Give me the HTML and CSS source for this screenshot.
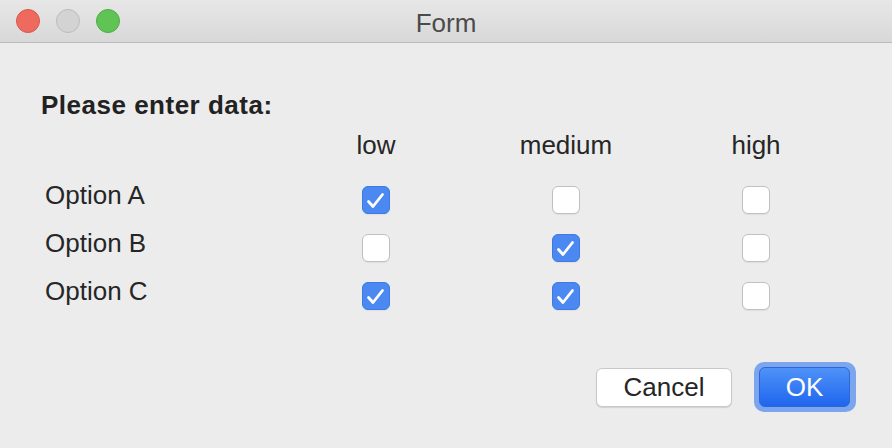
FILE: index.html
```html
<!DOCTYPE html>
<html>
<head>
<meta charset="utf-8">
<link rel="stylesheet" href="styles.css">
</head>
<body>
<div class="window">
  <div class="titlebar">
    <div class="lights">
      <span class="light red"></span>
      <span class="light gray"></span>
      <span class="light green"></span>
    </div>
    <div class="title">Form</div>
  </div>
  <div class="content">
    <h1 class="heading">Please enter data:</h1>
    <div class="grid">
      <div class="cell corner"></div>
      <div class="cell head">low</div>
      <div class="cell head">medium</div>
      <div class="cell head">high</div>

      <div class="cell label">Option A</div>
      <div class="cell box"><span class="cb on"><svg viewBox="0 0 26 26"><path d="M5.5 14.5 L10 19.5 L19.5 7.5"/></svg></span></div>
      <div class="cell box"><span class="cb"></span></div>
      <div class="cell box"><span class="cb"></span></div>

      <div class="cell label">Option B</div>
      <div class="cell box"><span class="cb"></span></div>
      <div class="cell box"><span class="cb on"><svg viewBox="0 0 26 26"><path d="M5.5 14.5 L10 19.5 L19.5 7.5"/></svg></span></div>
      <div class="cell box"><span class="cb"></span></div>

      <div class="cell label">Option C</div>
      <div class="cell box"><span class="cb on"><svg viewBox="0 0 26 26"><path d="M5.5 14.5 L10 19.5 L19.5 7.5"/></svg></span></div>
      <div class="cell box"><span class="cb on"><svg viewBox="0 0 26 26"><path d="M5.5 14.5 L10 19.5 L19.5 7.5"/></svg></span></div>
      <div class="cell box"><span class="cb"></span></div>
    </div>
    <div class="buttons">
      <button class="btn cancel">Cancel</button>
      <span class="focus"><button class="btn ok">OK</button></span>
    </div>
  </div>
</div>
</body>
</html>
```
FILE: styles.css
```css
html, body {
  margin: 0;
  padding: 0;
  background: #ececec;
}
body {
  font-family: "Liberation Sans", Arial, sans-serif;
  color: #262626;
}
.window {
  width: 892px;
  height: 448px;
  background: #ececec;
  display: flex;
  flex-direction: column;
}
.titlebar {
  height: 43px;
  box-sizing: border-box;
  background: linear-gradient(#e7e7e7, #d8d8d8);
  border-bottom: 1px solid #bcbcbc;
  display: flex;
  align-items: center;
  position: relative;
}
.lights {
  display: flex;
  gap: 16px;
  padding-left: 16px;
}
.light {
  width: 24px;
  height: 24px;
  border-radius: 50%;
  box-sizing: border-box;
}
.red { background: #ee6a5f; border: 1px solid #d7584e; }
.gray { background: #d3d3d3; border: 1px solid #bcbcbc; }
.green { background: #5fc454; border: 1px solid #4dac43; }
.title {
  position: absolute;
  left: 0;
  right: 0;
  top: 0;
  bottom: 0;
  padding-top: 4px;
  box-sizing: border-box;
  display: flex;
  align-items: center;
  justify-content: center;
  font-size: 26px;
  line-height: 30px;
  color: #4b4b4b;
  pointer-events: none;
}
.content {
  padding: 0 0 0 41px;
}
.heading {
  margin: 47px 0 0 0;
  font-size: 26px;
  font-weight: 700;
  color: #222222;
  line-height: 30px;
  letter-spacing: 0.5px;
}
.grid {
  display: grid;
  grid-template-columns: 240px 190px 190px 190px;
  grid-template-rows: 46px 48px 48px 48px;
  margin-top: 10px;
  font-size: 26px;
  line-height: 30px;
}
.cell {
  display: flex;
  align-items: center;
}
.head {
  justify-content: center;
  align-items: flex-start;
  color: #262626;
}
.label {
  padding-left: 4px;
  padding-bottom: 10px;
  box-sizing: border-box;
}
.box {
  justify-content: center;
}
.cb {
  width: 28px;
  height: 28px;
  box-sizing: border-box;
  border-radius: 6px;
  background: #ffffff;
  border: 1px solid #c0c0c0;
  box-shadow: 0 1px 1px rgba(0,0,0,0.06);
  display: flex;
}
.cb.on {
  background: #4b88f2;
  border: 1px solid #4079e3;
}
.cb svg {
  width: 26px;
  height: 26px;
  fill: none;
  stroke: #ffffff;
  stroke-width: 2.8;
  stroke-linecap: round;
  stroke-linejoin: round;
}
.buttons {
  display: flex;
  justify-content: flex-end;
  align-items: center;
  gap: 22px;
  padding-right: 36px;
  margin-top: 42px;
}
.btn {
  font-family: inherit;
  font-size: 26px;
  line-height: 30px;
  box-sizing: border-box;
  border-radius: 6px;
  padding: 0;
}
.cancel {
  width: 136px;
  height: 39px;
  background: #ffffff;
  border: 1px solid #c8c8c8;
  color: #262626;
  box-shadow: 0 1px 1px rgba(0,0,0,0.12);
}
.focus {
  display: inline-block;
  padding: 5px 6px 5px 5px;
  border-radius: 10px;
  background: #7ba6ee;
}
.ok {
  display: block;
  width: 91px;
  height: 40px;
  background: linear-gradient(#4f92f8, #1f66ee);
  border: 1px solid #2d66d6;
  color: #ffffff;
}
```
